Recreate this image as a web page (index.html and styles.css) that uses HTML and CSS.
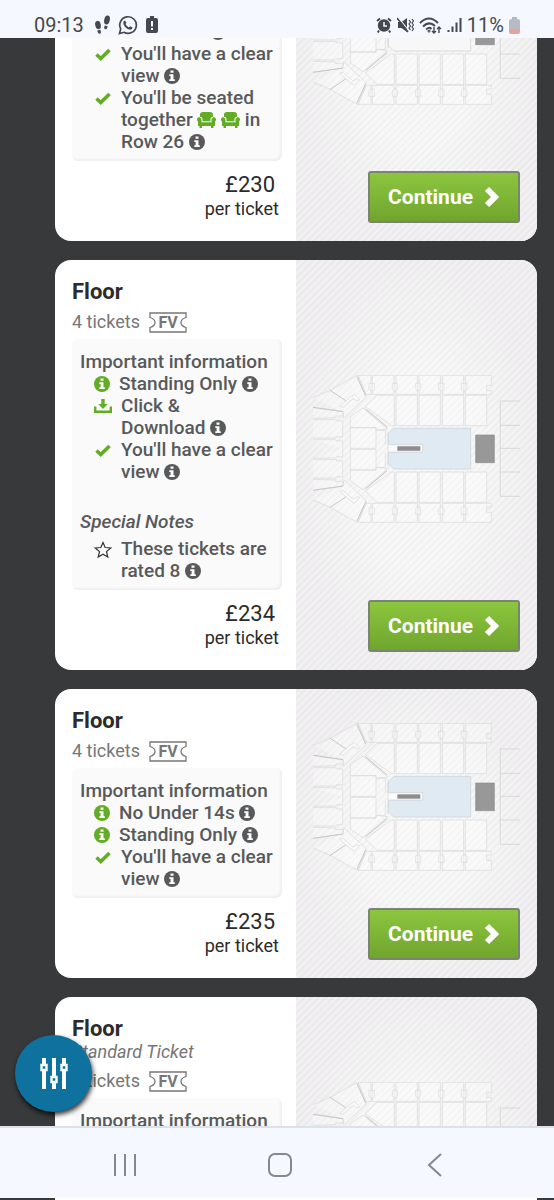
FILE: index.html
```html
<!DOCTYPE html>
<html lang="en">
<head>
    <meta charset="UTF-8">
    <meta name="viewport" content="width=device-width, initial-scale=1.0">
    <title>Tickets</title>
    <link rel="stylesheet" href="styles.css">
</head>
<body>

<!-- Shared icons -->
<svg class="sprite" aria-hidden="true">
    <symbol id="info" viewBox="0 0 16 16">
        <circle cx="8" cy="8" r="8" fill="currentColor"/>
        <path d="M6.5 2.4h3v2.4h-3zM5.3 6.2h4.2v5h1.3v1.9H5.3v-1.9h1.3V8.1H5.3z" fill="#fff"/>
    </symbol>
    <symbol id="check" viewBox="0 0 18 16">
        <path d="M2.5 8.5l4.3 4L15.5 4" fill="none" stroke="currentColor" stroke-width="3.6"/>
    </symbol>
    <symbol id="download" viewBox="0 0 18 16">
        <path d="M7.3 1h3.4v5h3L9 11 4.3 6h3z" fill="currentColor"/>
        <path d="M1.2 8.5v5.3h15.6V8.5" fill="none" stroke="currentColor" stroke-width="2.4"/>
    </symbol>
    <symbol id="star" viewBox="0 0 18 18">
        <path d="M9 1.5l2.2 5 5.5.5-4.2 3.6 1.3 5.4L9 13.2 4.2 16l1.3-5.4L1.3 7l5.5-.5z" fill="none" stroke="currentColor" stroke-width="1.2"/>
    </symbol>
    <symbol id="seat" viewBox="0 0 19 16">
        <path d="M3 5V3q0-3 3-3h7q3 0 3 3v2q3 0 3 2.500 0 1.500-1 2V14h-1.500v2H14v-2H5v2H2.500v-2H1V9.500q-1-.5-1-2Q0 5 3 5z" fill="currentColor"/>
        <path d="M2.800 5.300q2.200.2 2.200 2.200v2.300h9V7.500q0-2 2.200-2.200" fill="none" stroke="#fafafa" stroke-width="1.100"/>
    </symbol>
    <symbol id="ticket" viewBox="0 0 38 21">
        <path d="M1 1h36v4.5q-5 1.500-5 5t5 5V20H1v-4.500q5-1.500 5-5t-5-5z" fill="none" stroke="currentColor" stroke-width="1.3"/>
    </symbol>
    <symbol id="chevron" viewBox="0 0 16 22">
        <path d="M3 3l8 8-8 8" fill="none" stroke="currentColor" stroke-width="6"/>
    </symbol>

    <!-- One half of the stands, mirrored for the other side -->
    <symbol id="stand" viewBox="48 45 621 444" overflow="visible">
        <g fill="#fff" fill-opacity=".3" stroke="#dadada" stroke-width="2.2">
            <path d="M183 46H222V103H208zM226 46H291V103H226zM297 46H361V103H297zM366 46H430V103H366zM436 46H500V103H436z"/>
            <path d="M505 46H583V76H569V92H583V103H505z"/>
            <path d="M216 70h16v17l-4 5h-8l-4-5zM286 70h15v17l-4 5h-7l-4-5zM356 70h15v17l-4 5h-7l-4-5zM425 70h16v17l-4 5h-8l-4-5zM493 70h17v17l-4 5h-9l-4-5z"/>
            <path d="M240 106H292V197H284L205 140zM297 106H361V197H297zM366 106H430V197H366zM436 106H500V197H436zM505 106H569V197H505z"/>
            <path d="M48 113L98 92 160 57 183 46 208 110 140 174 138 155"/>
            <path d="M128 139L138 142 168 116 181 123 188 120 172 103 158 113z"/>
            <path d="M48 142L138 155V168H116V173L48 175"/>
            <path d="M48 179H115L120 183H137V230H118V234H48M48 239H115L120 243H137V266"/>
            <path d="M160 170L198 144 272 207 237 211V203H160zM160 203H237V265H160zM242 211H265V254M273 254V214"/>
        </g>
        <path d="M98 90L146 122M48 142L138 155M180 50L206 108M206 147L270 201" stroke="#c6c6c6" stroke-width="3" fill="none"/>
    </symbol>
    <symbol id="arena" viewBox="48 45 621 444">
        <use href="#stand" x="48" y="45" width="621" height="444"/>
        <g transform="matrix(1 0 0 -1 0 533)">
            <use href="#stand" x="48" y="45" width="621" height="444"/>
        </g>
        <path d="M290 205H521V327H290L274 311V276H377V254H274V221z" fill="currentColor" stroke="#ccd6dd" stroke-width="2.5"/>
        <path d="M273 254H377V276H273z" fill="#fafafa" stroke="#d8d8d8" stroke-width="2"/>
        <path d="M301 259h69v13h-69z" fill="#8d8d8d"/>
        <path d="M536 225h56v83h-56z" fill="#989898" stroke="#8d8d8d" stroke-width="2"/>
        <path d="M669 123H610V409H669M610 196H669M610 265H669M610 336H669" fill="none" stroke="#d4d4d4" stroke-width="2.5"/>
    </symbol>
</svg>

<header class="status-bar">
    <span class="clock">09:13</span>
    <svg width="18" height="20" viewBox="0 0 18 20" fill="currentColor" aria-hidden="true">
        <ellipse cx="4" cy="10" rx="2.8" ry="4.2" transform="rotate(-12 4 10)"/>
        <path d="M3.3 15.5l3-.8q1.400 3.300-.3 4-2 .5-2.700-3.200z"/>
        <ellipse cx="13" cy="5" rx="2.8" ry="4.5" transform="rotate(12 13 5)"/>
        <path d="M10.7 10.5l3 .8q-.7 3.500-2.500 3-1.700-.6-.5-3.800z"/>
    </svg>
    <svg width="20" height="20" viewBox="0 0 20 20" aria-hidden="true">
        <path d="M1.5 18.500l1.200-4.600A8.300 8.300 0 1 1 6 17.300z" fill="none" stroke="currentColor" stroke-width="1.7"/>
        <path d="M7 5.400l1.500 2.400-1 1.300q1 2.200 3.400 3.300l1.300-1.200 2.400 1.200q-.4 2.400-2.700 2.400Q6 13.200 5.200 8 5.300 5.800 7 5.400z" fill="currentColor"/>
    </svg>
    <svg class="status-alert" width="12" height="18" viewBox="0 0 12 18" aria-hidden="true">
        <path d="M4 0h4v2h2q2 0 2 2v11q0 2-2 2H2q-2 0-2-2V4q0-2 2-2h2z" fill="currentColor"/>
        <path d="M5 5h2v5.500H5zM5 12h2v2H5z" fill="#f5f9ff"/>
    </svg>
    <div class="status-right">
        <svg width="16" height="16" viewBox="0 0 16 16" aria-hidden="true">
            <circle cx="8" cy="8.5" r="6.2" fill="currentColor"/>
            <path d="M1 4l3-2.500M15 4l-3-2.500M3 13.500l-1.200 2M13 13.500l1.200 2" stroke="currentColor" stroke-width="2"/>
            <path d="M8 5v4h3" fill="none" stroke="#f5f9ff" stroke-width="1.5"/>
        </svg>
        <svg width="17" height="16" viewBox="0 0 17 16" aria-hidden="true">
            <path d="M1 5h3.500L10 1v14l-5.500-4H1z" fill="currentColor"/>
            <path d="M1 0l11 14" stroke="#f5f9ff" stroke-width="1.2"/>
            <path d="M0 1l11 14" stroke="currentColor" stroke-width="1.6"/>
            <path d="M12 3l1.500 2L12 7l1.500 2-1.500 2 1.500 2M15 2l1.500 2L15 6l1.500 2L15 10l1.500 2-1.500 2" fill="none" stroke="currentColor" stroke-width="1.2"/>
        </svg>
        <svg width="23" height="17" viewBox="0 0 23 17" fill="none" stroke="currentColor" stroke-width="2" aria-hidden="true">
            <path d="M1 6Q10-3 19 6M4 9.500Q10 3.500 16 9M7.200 12.500Q10 9.500 12.500 12"/>
            <circle cx="10" cy="14" r=".5"/>
            <path d="M15 10v6M13 14l2 2 2-2M20 16v-6M18 12l2-2 2 2" stroke-width="1.4"/>
        </svg>
        <svg width="15" height="16" viewBox="0 0 15 16" aria-hidden="true">
            <path d="M1.500 13v2M5.500 9.500V15M9.500 5.500V15M13.500 1v14" stroke="currentColor" stroke-width="2"/>
        </svg>
        <span class="battery-level">11%</span>
        <svg width="11" height="17" viewBox="0 0 11 17" aria-hidden="true">
            <path d="M3 0h5v2q3 0 3 2v9H0V4q0-2 3-2z" fill="#b7bbc4"/>
            <path d="M0 12h11v3q0 2-2 2H2q-2 0-2-2z" fill="#e9a296"/>
        </svg>
    </div>
</header>

<main class="results">
    <div class="ticket-list">

        <article class="card">
            <div class="details">
                <h2>Block 4</h2>
                <p class="quantity">2 tickets <svg class="fv" viewBox="0 0 38 21" aria-hidden="true"><use href="#ticket"/><text x="19" y="16">FV</text></svg></p>
                <section class="info-box">
                    <h3>Important information</h3>
                    <ul>
                        <li><svg class="icon round"><use href="#info"/></svg><span>No Under 14s&nbsp;<button type="button" class="tip" aria-label="More about age limit"><svg><use href="#info"/></svg></button></span></li>
                        <li><svg class="icon"><use href="#download"/></svg><span>Click &amp; <span class="keep">Download <button type="button" class="tip" aria-label="More about download"><svg><use href="#info"/></svg></button></span></span></li>
                        <li><svg class="icon"><use href="#check"/></svg><span>You'll have a clear <span class="keep">view <button type="button" class="tip" aria-label="More about view"><svg><use href="#info"/></svg></button></span></span></li>
                        <li><svg class="icon"><use href="#check"/></svg><span>You'll be seated together <svg class="seat"><use href="#seat"/></svg> <svg class="seat"><use href="#seat"/></svg> in <span class="keep">Row 26 <button type="button" class="tip" aria-label="More about seats"><svg><use href="#info"/></svg></button></span></span></li>
                    </ul>
                </section>
                <p class="price"><strong>£230</strong> <span>per ticket</span></p>
            </div>
            <div class="map-panel">
                <svg class="map no-floor" viewBox="0 0 207 148" aria-hidden="true"><use href="#arena"/></svg>
                <button type="button" class="btn-continue">Continue <svg><use href="#chevron"/></svg></button>
            </div>
        </article>

        <article class="card">
            <div class="details">
                <h2>Floor</h2>
                <p class="quantity">4 tickets <svg class="fv" viewBox="0 0 38 21" aria-hidden="true"><use href="#ticket"/><text x="19" y="16">FV</text></svg></p>
                <section class="info-box">
                    <h3>Important information</h3>
                    <ul>
                        <li><svg class="icon round"><use href="#info"/></svg><span>Standing Only&nbsp;<button type="button" class="tip" aria-label="More about standing"><svg><use href="#info"/></svg></button></span></li>
                        <li><svg class="icon"><use href="#download"/></svg><span>Click &amp; <span class="keep">Download <button type="button" class="tip" aria-label="More about download"><svg><use href="#info"/></svg></button></span></span></li>
                        <li><svg class="icon"><use href="#check"/></svg><span>You'll have a clear <span class="keep">view <button type="button" class="tip" aria-label="More about view"><svg><use href="#info"/></svg></button></span></span></li>
                    </ul>
                    <h4>Special Notes</h4>
                    <ul>
                        <li><svg class="icon star"><use href="#star"/></svg><span>These tickets are <span class="keep">rated 8 <button type="button" class="tip" aria-label="More about rating"><svg><use href="#info"/></svg></button></span></span></li>
                    </ul>
                </section>
                <p class="price"><strong>£234</strong> <span>per ticket</span></p>
            </div>
            <div class="map-panel">
                <svg class="map" viewBox="0 0 207 148" aria-hidden="true"><use href="#arena"/></svg>
                <button type="button" class="btn-continue">Continue <svg><use href="#chevron"/></svg></button>
            </div>
        </article>

        <article class="card">
            <div class="details">
                <h2>Floor</h2>
                <p class="quantity">4 tickets <svg class="fv" viewBox="0 0 38 21" aria-hidden="true"><use href="#ticket"/><text x="19" y="16">FV</text></svg></p>
                <section class="info-box">
                    <h3>Important information</h3>
                    <ul>
                        <li><svg class="icon round"><use href="#info"/></svg><span>No Under 14s&nbsp;<button type="button" class="tip" aria-label="More about age limit"><svg><use href="#info"/></svg></button></span></li>
                        <li><svg class="icon round"><use href="#info"/></svg><span>Standing Only&nbsp;<button type="button" class="tip" aria-label="More about standing"><svg><use href="#info"/></svg></button></span></li>
                        <li><svg class="icon"><use href="#check"/></svg><span>You'll have a clear <span class="keep">view <button type="button" class="tip" aria-label="More about view"><svg><use href="#info"/></svg></button></span></span></li>
                    </ul>
                </section>
                <p class="price"><strong>£235</strong> <span>per ticket</span></p>
            </div>
            <div class="map-panel">
                <svg class="map" viewBox="0 0 207 148" aria-hidden="true"><use href="#arena"/></svg>
                <button type="button" class="btn-continue">Continue <svg><use href="#chevron"/></svg></button>
            </div>
        </article>

        <article class="card">
            <div class="details">
                <h2>Floor</h2>
                <p class="ticket-type">Standard Ticket</p>
                <p class="quantity">4 tickets <svg class="fv" viewBox="0 0 38 21" aria-hidden="true"><use href="#ticket"/><text x="19" y="16">FV</text></svg></p>
                <section class="info-box">
                    <h3>Important information</h3>
                    <ul>
                        <li><svg class="icon round"><use href="#info"/></svg><span>Standing Only&nbsp;<button type="button" class="tip" aria-label="More about standing"><svg><use href="#info"/></svg></button></span></li>
                        <li><svg class="icon"><use href="#check"/></svg><span>You'll have a clear <span class="keep">view <button type="button" class="tip" aria-label="More about view"><svg><use href="#info"/></svg></button></span></span></li>
                    </ul>
                    <h4>Special Notes</h4>
                    <ul>
                        <li><svg class="icon star"><use href="#star"/></svg><span>Rated 8&nbsp;<button type="button" class="tip" aria-label="More about rating"><svg><use href="#info"/></svg></button></span></li>
                    </ul>
                </section>
                <p class="price"><strong>£235</strong> <span>per ticket</span></p>
            </div>
            <div class="map-panel">
                <svg class="map" viewBox="0 0 207 148" aria-hidden="true"><use href="#arena"/></svg>
                <button type="button" class="btn-continue">Continue <svg><use href="#chevron"/></svg></button>
            </div>
        </article>

    </div>

    <button type="button" class="btn-filter" aria-label="Filters">
        <svg width="28" height="32" viewBox="0 0 28 32" fill="none" stroke="currentColor" aria-hidden="true">
            <path d="M4 0v6M4 13v18M14 0v18M14 25v6M24 0v6M24 13v18" stroke-width="4"/>
            <path d="M1.500 7h5v5h-5zM11.500 19h5v5h-5zM21.500 7h5v5h-5z" stroke-width="2.4"/>
        </svg>
    </button>
</main>

<nav class="nav-bar">
    <button type="button" aria-label="Recent apps">
        <svg width="24" height="24" viewBox="0 0 24 24"><path d="M2 1v22M12 1v22M22 1v22"/></svg>
    </button>
    <button type="button" aria-label="Home">
        <svg width="24" height="24" viewBox="0 0 24 24"><rect x="1" y="1" width="22" height="22" rx="6"/></svg>
    </button>
    <button type="button" aria-label="Back">
        <svg width="24" height="24" viewBox="0 0 24 24"><path d="M18 1L6 12l12 11"/></svg>
    </button>
</nav>
<div class="page-edge"></div>

</body>
</html>
```

FILE: styles.css
```css
* {
    box-sizing: border-box;
}
body {
    margin: 0;
    height: 100vh;
    display: flex;
    flex-direction: column;
    background-color: #38393b;
    font-family: Roboto, "Liberation Sans", sans-serif;
    font-size: 18px;
    line-height: 22px;
    color: #2b2b2b;
}
h2, h3, h4, p, ul {
    margin: 0;
    padding: 0;
}
button {
    font-family: inherit;
    border: none;
    padding: 0;
    cursor: pointer;
}
.sprite {
    position: absolute;
    width: 0;
    height: 0;
}

/* Status bar */
.status-bar {
    display: flex;
    align-items: center;
    gap: 6px;
    height: 38px;
    padding: 12px 34px 0;
    background-color: #f5f9ff;
    color: #45484d;
    font-size: 20px;
    flex-shrink: 0;
}
.clock {
    margin-right: 4px;
}
.status-alert {
    margin-left: 2px;
}
.status-right {
    display: flex;
    align-items: center;
    gap: 5px;
    margin-left: auto;
}

/* Ticket list */
.results {
    position: relative;
    flex: 1;
    min-height: 0;
    overflow: hidden;
}
.ticket-list {
    display: flex;
    flex-direction: column;
    gap: 19px;
    padding: 0 17px 0 55px;
    margin-top: -174px;
}
.card {
    display: grid;
    grid-template-columns: 1fr 1fr;
    background-color: #fff;
    border-radius: 16px;
    overflow: hidden;
    flex-shrink: 0;
}
.details {
    padding: 20px 14px 20px 17px;
}
.details h2 {
    font-size: 22px;
    line-height: 24px;
    font-weight: bold;
}
.ticket-type {
    font-style: italic;
    color: #757575;
}
.quantity {
    display: flex;
    align-items: center;
    gap: 9px;
    height: 24px;
    margin: 6px 0 5px;
    color: #777;
}
.fv {
    width: 38px;
    height: 21px;
}
.fv text {
    font-size: 16px;
    font-weight: bold;
    text-anchor: middle;
    fill: currentColor;
}

/* Important information */
.info-box {
    padding: 12px 4px 8px 8px;
    background-color: #fafafa;
    border-radius: 6px;
    box-shadow: inset -2px -2px 2px #efefef;
    color: #58595a;
    font-size: 19px;
    font-weight: 500;
}
.info-box h3, .info-box h4 {
    font-size: 19px;
    line-height: 22px;
    font-weight: 500;
}
.info-box h4 {
    margin: 28px 0 5px;
    font-style: italic;
}
.info-box ul {
    list-style: none;
    padding-left: 14px;
}
.info-box li {
    display: flex;
    gap: 9px;
}
.keep {
    white-space: nowrap;
}
.icon {
    width: 18px;
    height: 16px;
    margin-top: 3px;
    color: #62ac26;
    flex-shrink: 0;
}
.icon.round {
    width: 16px;
}
.icon.star {
    height: 18px;
    color: #333;
}
.tip {
    background: none;
    color: inherit;
    height: 16px;
    vertical-align: -2px;
}
.tip svg {
    display: block;
    width: 16px;
    height: 16px;
}
.seat {
    width: 19px;
    height: 16px;
    color: #62ac26;
    vertical-align: -2px;
}

/* Price */
.price {
    display: flex;
    flex-direction: column;
    align-items: flex-end;
    margin-top: 12px;
    padding-right: 3px;
    line-height: 24px;
}
.price strong {
    font-size: 22px;
    font-weight: normal;
    padding-right: 4px;
}

/* Seat map */
.map-panel {
    display: flex;
    flex-direction: column;
    padding: 0 17px 18px;
    background:
        repeating-linear-gradient(-45deg, rgba(255, 255, 255, 0.4) 0, rgba(220, 218, 220, 0.2) 3px, rgba(255, 255, 255, 0.4) 5px),
        radial-gradient(closest-side, #f6f6f6 50%, #edebed 100%);
}
.map-panel::before {
    content: "";
    flex: 2 0 0;
}
.map-panel::after {
    content: "";
    flex: 1 0 20px;
    order: 1;
}
.map {
    width: 100%;
    color: #e0eaf2;
}
.map.no-floor {
    color: #f7f7f7;
}
.btn-continue {
    order: 2;
    align-self: flex-end;
    display: flex;
    align-items: center;
    gap: 11px;
    height: 52px;
    padding: 0 18px;
    border: 2px solid #7b8474;
    border-radius: 3px;
    background-image: linear-gradient(#8cc63f, #70a52d);
    color: #fff;
    font-size: 21px;
    font-weight: bold;
}
.btn-continue svg {
    width: 16px;
    height: 22px;
}

/* Filter button over the list */
.btn-filter {
    position: absolute;
    left: 15px;
    bottom: 14px;
    display: flex;
    align-items: center;
    justify-content: center;
    width: 77px;
    height: 77px;
    border-radius: 50%;
    background-color: #0e719e;
    box-shadow: 1px 3px 5px rgba(0, 0, 0, 0.8);
    color: #fff;
}

/* Android navigation */
.nav-bar {
    display: grid;
    grid-template-columns: repeat(3, 1fr);
    height: 72px;
    padding: 4px 41px 0 47px;
    border-top: 2px solid #dde1e8;
    background-color: #f5f9ff;
    flex-shrink: 0;
}
.nav-bar button {
    display: flex;
    align-items: center;
    justify-content: center;
    background: none;
    color: #85888c;
}
.nav-bar svg {
    fill: none;
    stroke: currentColor;
    stroke-width: 2;
}
.page-edge {
    height: 2px;
    margin: 0 17px 0 55px;
    background-color: #fff;
    flex-shrink: 0;
}
```
